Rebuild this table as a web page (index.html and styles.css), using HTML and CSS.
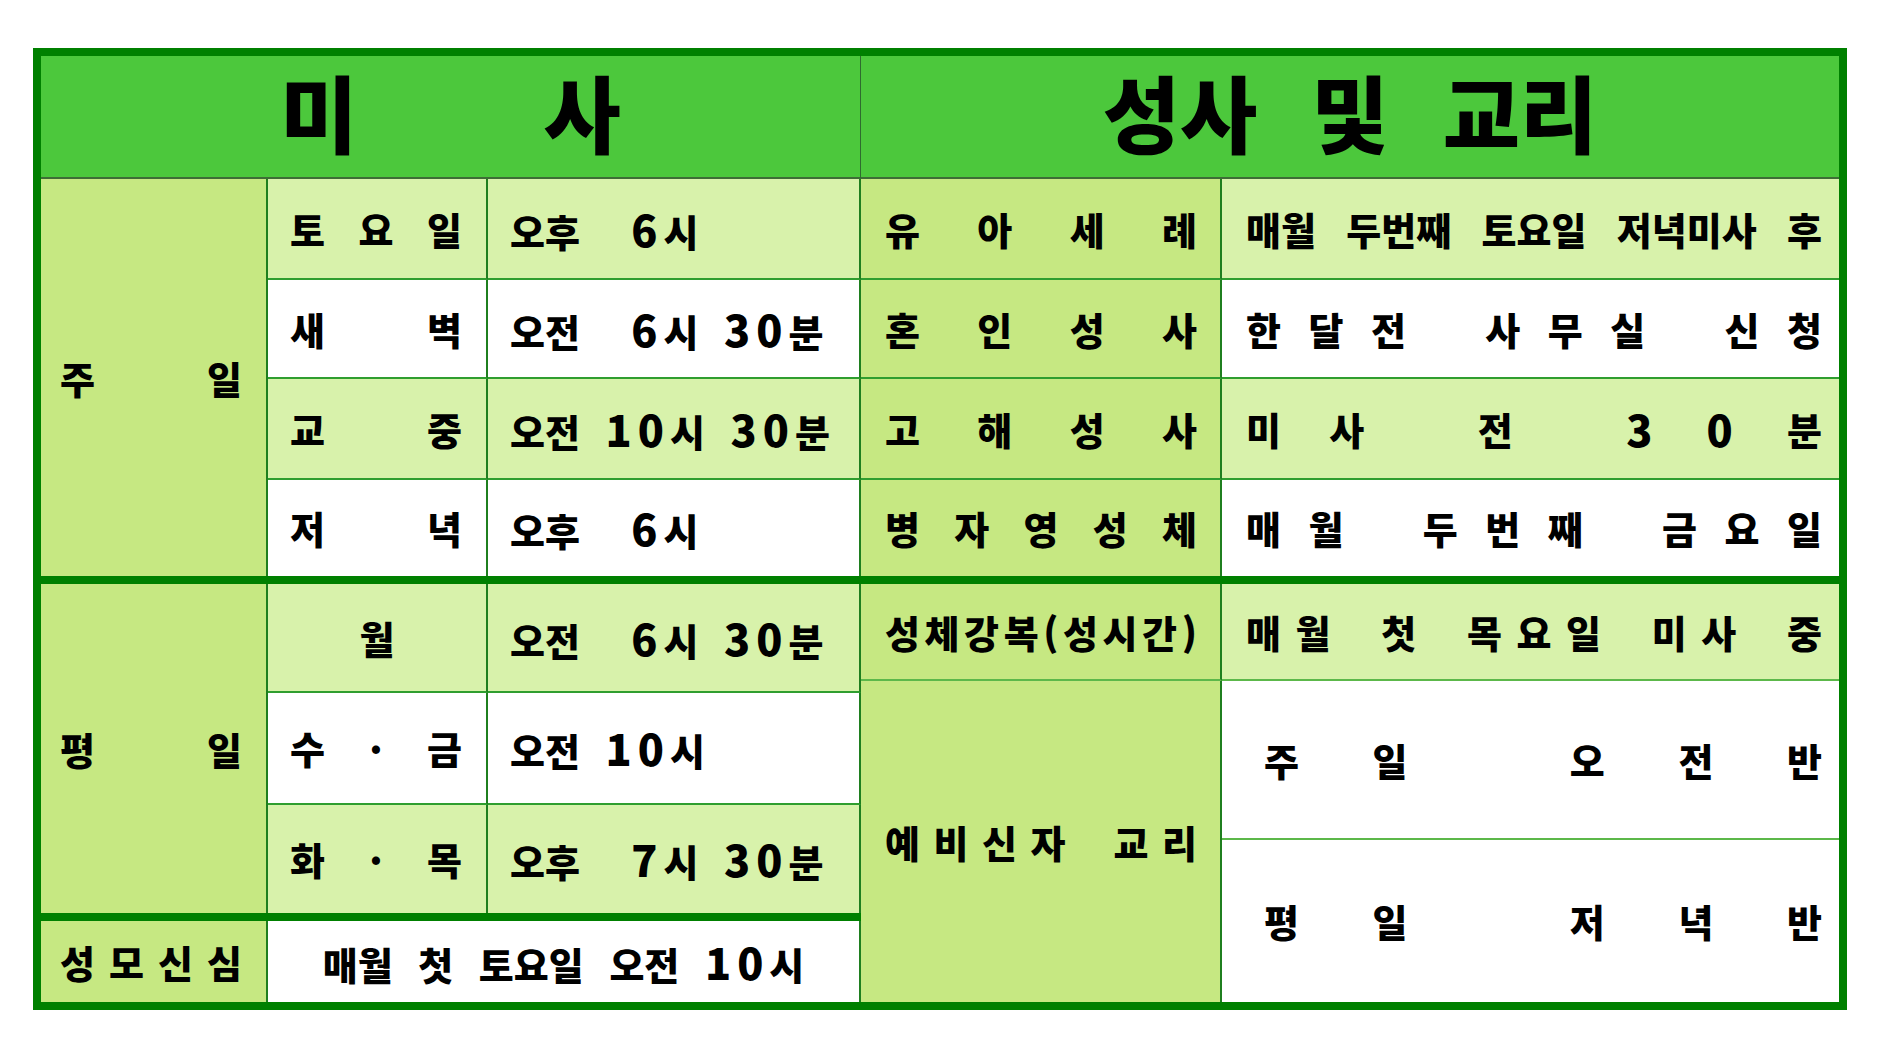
FILE: index.html
```html
<!DOCTYPE html>
<html lang="ko">
<head>
<meta charset="utf-8">
<title>미사 및 성사 시간표</title>
<link rel="stylesheet" href="styles.css">
</head>
<body>
<div class="board">
  <div class="sec left">
    <div class="c hd hdl cs3"><span>미</span><span>사</span></div>

    <div class="c g br d p1 rs4"><span>주</span><span>일</span></div>
    <div class="c l br bb d p2"><span>토</span><span>요</span><span>일</span></div>
    <div class="c l br bb t"><span class="in">오후  <span class="n">6</span>시</span></div>
    <div class="c w br bb d p2"><span>새</span><span>벽</span></div>
    <div class="c w br bb t"><span class="in">오전  <span class="n">6</span>시 <span class="n">30</span>분</span></div>
    <div class="c l br bb d p2"><span>교</span><span>중</span></div>
    <div class="c l br bb t"><span class="in">오전 <span class="n">10</span>시 <span class="n">30</span>분</span></div>
    <div class="c w br d p2"><span>저</span><span>녁</span></div>
    <div class="c w br t"><span class="in">오후  <span class="n">6</span>시</span></div>

    <div class="thick cs3"></div>

    <div class="c g br d p1 rs3"><span>평</span><span>일</span></div>
    <div class="c l br bb ctr"><span>월</span></div>
    <div class="c l br bb t"><span class="in">오전  <span class="n">6</span>시 <span class="n">30</span>분</span></div>
    <div class="c w br bb d p2"><span>수</span><span class="dot">·</span><span>금</span></div>
    <div class="c w br bb t"><span class="in">오전 <span class="n">10</span>시</span></div>
    <div class="c l br d p2"><span>화</span><span class="dot">·</span><span>목</span></div>
    <div class="c l br t"><span class="in">오후  <span class="n">7</span>시 <span class="n">30</span>분</span></div>

    <div class="thick cs3"></div>

    <div class="c g br d p1"><span>성</span><span>모</span><span>신</span><span>심</span></div>
    <div class="c w br ctr cs2"><span class="in">매월 첫 토요일 오전 <span class="n">10</span>시</span></div>
  </div>

  <div class="sec right">
    <div class="c hd hdr cs2"><span>성사</span><span>및</span><span>교리</span></div>

    <div class="c g br bb d p4"><span>유</span><span>아</span><span>세</span><span>례</span></div>
    <div class="c l bb d p5"><span>매월</span><span>두번째</span><span>토요일</span><span>저녁미사</span><span>후</span></div>
    <div class="c g br bb d p4"><span>혼</span><span>인</span><span>성</span><span>사</span></div>
    <div class="c w bb d p5"><span>한</span><span>달</span><span>전</span><span class="s24"></span><span>사</span><span>무</span><span>실</span><span class="s24"></span><span>신</span><span>청</span></div>
    <div class="c g br bb d p4"><span>고</span><span>해</span><span>성</span><span>사</span></div>
    <div class="c l bb d p5"><span>미</span><span>사</span><span class="s17"></span><span>전</span><span class="s17"></span><span class="n">3</span><span class="n">0</span><span>분</span></div>
    <div class="c g br d p4"><span>병</span><span>자</span><span>영</span><span>성</span><span>체</span></div>
    <div class="c w d p5"><span>매</span><span>월</span><span class="s24"></span><span>두</span><span>번</span><span>째</span><span class="s24"></span><span>금</span><span>요</span><span>일</span></div>

    <div class="thick cs2"></div>

    <div class="c g br bbl d p4"><span>성</span><span>체</span><span>강</span><span>복</span><span>(</span><span>성</span><span>시</span><span>간</span><span>)</span></div>
    <div class="c l bbl d p5"><span>매</span><span>월</span><span class="s22"></span><span>첫</span><span class="s22"></span><span>목</span><span>요</span><span>일</span><span class="s22"></span><span>미</span><span>사</span><span class="s22"></span><span>중</span></div>
    <div class="c g br d p4 rs2"><span>예</span><span>비</span><span>신</span><span>자</span><span class="s21"></span><span>교</span><span>리</span></div>
    <div class="c w bbl d p6"><span>주</span><span>일</span><span class="s15"></span><span>오</span><span>전</span><span>반</span></div>
    <div class="c w d p6"><span>평</span><span>일</span><span class="s15"></span><span>저</span><span>녁</span><span>반</span></div>
  </div>
</div>
</body>
</html>
```

FILE: styles.css
```css
html, body {
  margin: 0;
  padding: 0;
  background: #ffffff;
}

body {
  font-family: "Noto Sans CJK KR", "Noto Sans", sans-serif;
  font-weight: 900;
  color: #000;
}

.board {
  margin: 48px 0 0 33px;
  width: 1814px;
  height: 962px;
  border: 8px solid #008000;
  box-sizing: border-box;
  display: flex;
}

.sec {
  display: grid;
}

.left {
  width: 820px;
  grid-template-columns: 227px 220px 373px;
  grid-template-rows: 123px 101px 99px 101px 96px 8px 109px 112px 108px 8px 81px;
}

.right {
  width: 978px;
  grid-template-columns: 361px 617px;
  grid-template-rows: 123px 101px 99px 101px 96px 8px 97px 159px 162px;
}

.c {
  display: flex;
  align-items: center;
  box-sizing: border-box;
  font-size: 38px;
  line-height: 1.2;
}

.cs3 { grid-column: span 3; }
.cs2 { grid-column: span 2; }
.rs4 { grid-row: span 4; }
.rs3 { grid-row: span 3; }
.rs2 { grid-row: span 2; }

.hd {
  background: #4cc83c;
  border-bottom: 2px solid #3e6d36;
  justify-content: center;
  font-size: 84px;
  line-height: 1.2;
  padding-bottom: 10px;
}

.hdl {
  gap: 186px;
  border-right: 1px solid #2f6b2f;
}

.hdr {
  gap: 54px;
}

.thick {
  background: #008000;
}

.g { background: #c6e882; }
.l { background: #d8f2ab; }
.w { background: #ffffff; }

.br { border-right: 2px solid #1f7f1f; }
.bb { border-bottom: 2px solid #2f9e2f; }
.bbl { border-bottom: 2px solid #5cb84a; }

.d { justify-content: space-between; }
.ctr { justify-content: center; }

.p1 { padding: 0 24px 0 19px; }
.p2 { padding: 0 24px 0 22px; }
.p4 { padding: 0 23px 0 24px; }
.p5 { padding: 0 17px 0 24px; }
.p6 { padding: 0 17px 0 42px; }

.t {
  padding-left: 22px;
}

.in {
  white-space: pre;
  word-spacing: 15px;
}

.n {
  font-size: 43px;
  letter-spacing: 6px;
}

.dot {
  font-size: 38px;
}

.s24 { width: 24px; }
.s22 { width: 22px; }
.s21 { width: 21px; }
.s17 { width: 17px; }
.s15 { width: 15px; }
```
